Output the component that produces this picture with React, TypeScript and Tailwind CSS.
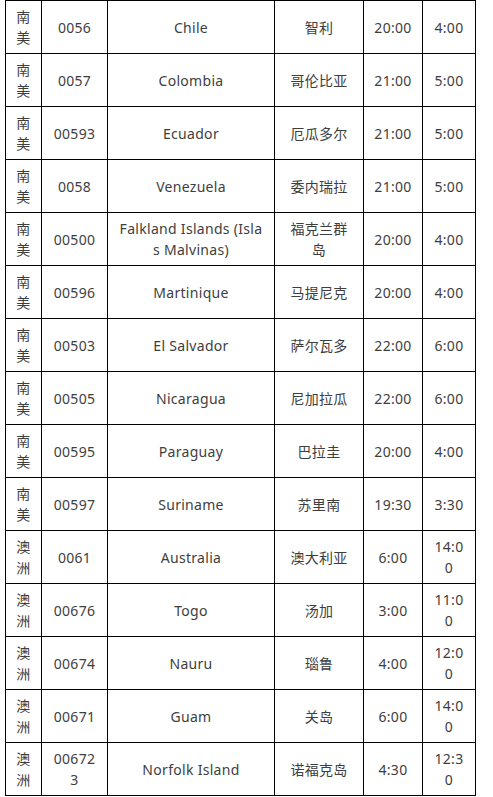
import React from "react";

type Row = [string, string, string, string, string, string];

const rows: Row[] = [
  ["南美", "0056", "Chile", "智利", "20:00", "4:00"],
  ["南美", "0057", "Colombia", "哥伦比亚", "21:00", "5:00"],
  ["南美", "00593", "Ecuador", "厄瓜多尔", "21:00", "5:00"],
  ["南美", "0058", "Venezuela", "委内瑞拉", "21:00", "5:00"],
  ["南美", "00500", "Falkland Islands (Islas Malvinas)", "福克兰群岛", "20:00", "4:00"],
  ["南美", "00596", "Martinique", "马提尼克", "20:00", "4:00"],
  ["南美", "00503", "El Salvador", "萨尔瓦多", "22:00", "6:00"],
  ["南美", "00505", "Nicaragua", "尼加拉瓜", "22:00", "6:00"],
  ["南美", "00595", "Paraguay", "巴拉圭", "20:00", "4:00"],
  ["南美", "00597", "Suriname", "苏里南", "19:30", "3:30"],
  ["澳洲", "0061", "Australia", "澳大利亚", "6:00", "14:00"],
  ["澳洲", "00676", "Togo", "汤加", "3:00", "11:00"],
  ["澳洲", "00674", "Nauru", "瑙鲁", "4:00", "12:00"],
  ["澳洲", "00671", "Guam", "关岛", "6:00", "14:00"],
  ["澳洲", "006723", "Norfolk Island", "诺福克岛", "4:30", "12:30"],
];

const widths = ["w-[36px]", "w-[66px]", "w-[167px]", "w-[89px]", "w-[59px]", "w-[53px]"];

export default function App() {
  return (
    <div className="min-h-screen bg-white pl-[5px] font-['Noto_Sans','Noto_Sans_CJK_SC',sans-serif] text-[14px] leading-[21px] tracking-[0.3px] text-[#3e3e3e]">
      <table className="table-fixed border-collapse w-[471px]">
        <colgroup>
          {widths.map((w, i) => (
            <col key={i} className={w} />
          ))}
        </colgroup>
        <tbody>
          {rows.map((r, i) => (
            <tr key={i} className="h-[53px]">
              {r.map((c, j) => (
                <td
                  key={j}
                  className="border border-black px-[10px] py-[5px] text-center align-middle break-all"
                >
                  {c}
                </td>
              ))}
            </tr>
          ))}
        </tbody>
      </table>
    </div>
  );
}
